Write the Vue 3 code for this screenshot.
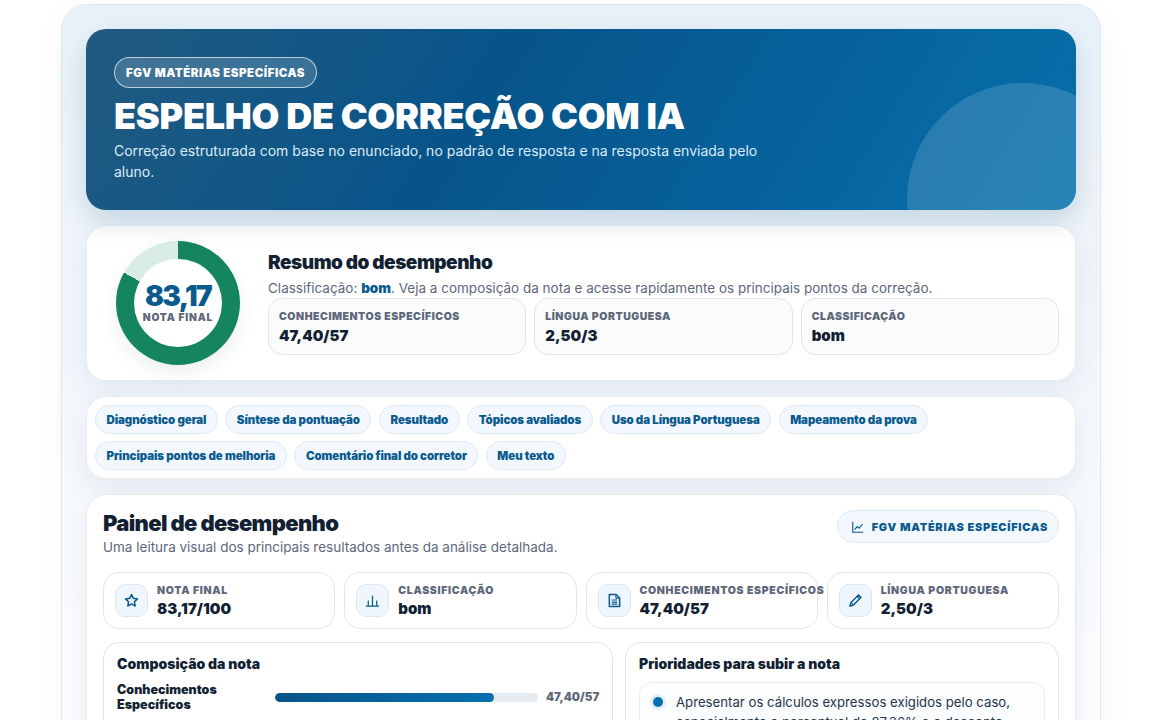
<script setup>
const miniCards = [
  { label: 'Conhecimentos Específicos', value: '47,40/57' },
  { label: 'Língua Portuguesa', value: '2,50/3' },
  { label: 'Classificação', value: 'bom' }
]

const navLinks = [
  'Diagnóstico geral',
  'Síntese da pontuação',
  'Resultado',
  'Tópicos avaliados',
  'Uso da Língua Portuguesa',
  'Mapeamento da prova',
  'Principais pontos de melhoria',
  'Comentário final do corretor',
  'Meu texto'
]

const stats = [
  { icon: 'star', label: 'Nota final', value: '83,17/100' },
  { icon: 'bars', label: 'Classificação', value: 'bom' },
  { icon: 'doc', label: 'Conhecimentos Específicos', value: '47,40/57' },
  { icon: 'pencil', label: 'Língua Portuguesa', value: '2,50/3' }
]

const bars = [
  { label: 'Conhecimentos Específicos', pct: 83.16, value: '47,40/57' },
  { label: 'Língua Portuguesa', pct: 83.33, value: '2,50/3' }
]

const priorities = [
  'Apresentar os cálculos expressos exigidos pelo caso, especialmente o percentual de 87,36% e o desconto aplicado.'
]
</script>

<template>
  <div class="page">
    <main class="shell">
      <header class="hero">
        <span class="hero-badge">FGV MATÉRIAS ESPECÍFICAS</span>
        <h1>ESPELHO DE CORREÇÃO COM IA</h1>
        <p>Correção estruturada com base no enunciado, no padrão de resposta e na resposta enviada pelo aluno.</p>
      </header>

      <section class="card summary">
        <div class="donut-wrap">
          <div class="donut">
            <div class="donut-hole">
              <strong>83,17</strong>
              <span>NOTA FINAL</span>
            </div>
          </div>
        </div>
        <div class="summary-body">
          <h2>Resumo do desempenho</h2>
          <p>Classificação: <b>bom</b>. Veja a composição da nota e acesse rapidamente os principais pontos da correção.</p>
          <div class="mini-grid">
            <div v-for="m in miniCards" :key="m.label" class="mini">
              <span>{{ m.label }}</span>
              <strong>{{ m.value }}</strong>
            </div>
          </div>
        </div>
      </section>

      <nav class="card links">
        <a v-for="link in navLinks" :key="link" class="link-chip">{{ link }}</a>
      </nav>

      <section class="card panel">
        <div class="panel-head">
          <div>
            <h2>Painel de desempenho</h2>
            <p>Uma leitura visual dos principais resultados antes da análise detalhada.</p>
          </div>
          <span class="panel-chip">
            <svg width="12" height="12" viewBox="0 0 16 16" fill="none" stroke="currentColor" stroke-width="1.5">
              <path d="M1 1v14h14" />
              <path d="M3.5 11.5 7 7.5l2.5 2L14 4" />
            </svg>
            FGV MATÉRIAS ESPECÍFICAS
          </span>
        </div>

        <div class="stats">
          <div v-for="s in stats" :key="s.label" class="stat">
            <div class="stat-icon">
              <svg width="15" height="15" viewBox="0 0 16 16" fill="none" stroke="currentColor" stroke-width="1.6" stroke-linejoin="round">
                <path v-if="s.icon === 'star'" d="M8 1.6l1.95 4.1 4.45.6-3.25 3.1.8 4.5L8 11.7l-3.95 2.2.8-4.5L1.6 6.3l4.45-.6z" />
                <path v-else-if="s.icon === 'bars'" d="M1 14h14M3.5 14V8M8 14V3M12.5 14V8" stroke-width="1.3" />
                <g v-else-if="s.icon === 'doc'">
                  <path d="M2.5 1.5h7.2l3.8 3.8v9.2h-11z" />
                  <path d="M9.5 1.5v4h4M5 7.5h6M5 9.7h6M5 11.9h6" stroke-width="1.2" />
                </g>
                <g v-else>
                  <path d="M11.2 2.2l2.6 2.6-8.3 8.3-3.4.8.8-3.4z" />
                  <path d="M9.7 3.7l2.6 2.6M3.6 10.5l1.9 1.9" stroke-width="1.1" />
                </g>
              </svg>
            </div>
            <div class="stat-text">
              <span>{{ s.label }}</span>
              <strong>{{ s.value }}</strong>
            </div>
          </div>
        </div>

        <div class="columns">
          <div class="box">
            <h3>Composição da nota</h3>
            <div v-for="b in bars" :key="b.label" class="bar-row">
              <span class="bar-label">{{ b.label }}</span>
              <div class="bar-track">
                <div class="bar-fill" :style="{ width: b.pct + '%' }"></div>
              </div>
              <span class="bar-value">{{ b.value }}</span>
            </div>
          </div>
          <div class="box">
            <h3>Prioridades para subir a nota</h3>
            <div v-for="p in priorities" :key="p" class="priority">
              <i class="priority-dot"></i>
              <p>{{ p }}</p>
            </div>
          </div>
        </div>
      </section>
    </main>
  </div>
</template>

<style>
html, body {
  margin: 0;
  background: #fff;
}
</style>

<style scoped>
* {
  box-sizing: border-box;
}

.page {
  height: 720px;
  overflow: hidden;
  padding: 4px 59px 0 61px;
  font-family: Inter, "Liberation Sans", sans-serif;
  color: #131f32;
}

.shell {
  display: flex;
  flex-direction: column;
  gap: 15px;
  padding: 24px;
  border: 1px solid #dfe6ee;
  border-radius: 26px;
  background: linear-gradient(180deg, #e8f1f8 0, #fbfcfe 640px);
  box-shadow: 0 10px 30px rgba(20, 50, 80, 0.05);
}

.hero {
  position: relative;
  overflow: hidden;
  height: 181px;
  padding: 28px;
  border-radius: 20px;
  background: linear-gradient(122deg, #215a80 0%, #07548a 40%, #0670ad 100%);
  box-shadow: 0 12px 28px rgba(11, 75, 120, 0.18);
  color: #fff;
}

.hero::after {
  content: '';
  position: absolute;
  top: 54px;
  right: -63px;
  width: 232px;
  height: 232px;
  border-radius: 50%;
  background: rgba(255, 255, 255, 0.14);
}

.hero-badge {
  display: inline-flex;
  align-items: center;
  height: 31px;
  padding: 0 11px;
  border: 1px solid rgba(255, 255, 255, 0.65);
  border-radius: 999px;
  background: rgba(255, 255, 255, 0.16);
  font-size: 11.5px;
  font-weight: 900;
  letter-spacing: 0.046em;
}

.hero h1 {
  margin: 9px 0 0;
  font-size: 36px;
  line-height: 38px;
  font-weight: 900;
  letter-spacing: -0.007em;
}

.hero p {
  position: relative;
  z-index: 1;
  width: 680px;
  margin: 5px 0 0;
  font-size: 14px;
  line-height: 21px;
  color: #dcecf7;
}

.card {
  border: 1px solid #e6ecf2;
  border-radius: 20px;
  background: #fff;
  box-shadow: 0 12px 28px rgba(20, 60, 100, 0.08);
}

.summary {
  display: grid;
  grid-template-columns: 148px 1fr;
  gap: 16px;
  align-items: center;
  padding: 15px 16px 15px 17px;
}

.donut-wrap {
  display: flex;
  justify-content: center;
}

.donut {
  display: flex;
  align-items: center;
  justify-content: center;
  width: 124px;
  height: 124px;
  border-radius: 50%;
  background: conic-gradient(#14855c 0 83.17%, #d9ede6 83.17% 100%);
  box-shadow: 0 8px 18px rgba(20, 50, 80, 0.08);
}

.donut-hole {
  display: flex;
  flex-direction: column;
  align-items: center;
  justify-content: center;
  width: 88px;
  height: 88px;
  padding-bottom: 1px;
  border-radius: 50%;
  background: #fff;
}

.donut-hole strong {
  font-size: 28px;
  line-height: 26px;
  font-weight: 900;
  letter-spacing: -0.06em;
  color: #0b5a8e;
}

.donut-hole span {
  margin-top: 2px;
  font-size: 10.2px;
  line-height: 12px;
  font-weight: 900;
  letter-spacing: 0.08em;
  color: #5d6779;
  white-space: nowrap;
}

.summary-body h2 {
  margin: 0;
  font-size: 19px;
  line-height: 24px;
  font-weight: 900;
  letter-spacing: -0.025em;
}

.summary-body p {
  margin: 5px 0 0;
  font-size: 13.5px;
  line-height: 16px;
  color: #5d6779;
}

.summary-body p b {
  font-weight: 900;
  color: #0b5a8e;
}

.mini-grid {
  display: grid;
  grid-template-columns: repeat(3, 1fr);
  gap: 8px;
  margin-top: 2px;
}

.mini {
  display: flex;
  flex-direction: column;
  justify-content: center;
  height: 57px;
  padding: 1px 10px 0;
  border: 1px solid #dfe6ee;
  border-radius: 14px;
  background: #f9fbfd;
}

.mini span,
.stat-text span {
  font-size: 10.5px;
  line-height: 14px;
  font-weight: 900;
  letter-spacing: 0.05em;
  color: #5d6779;
  text-transform: uppercase;
  white-space: nowrap;
}

.mini strong,
.stat-text strong {
  margin-top: 2px;
  font-size: 15px;
  line-height: 19px;
  font-weight: 900;
}

.links {
  display: flex;
  flex-wrap: wrap;
  gap: 7px 7.5px;
  padding: 8px;
}

.link-chip {
  display: inline-flex;
  align-items: center;
  height: 29px;
  padding: 0 10.5px;
  border: 1px solid #dfe9f2;
  border-radius: 999px;
  background: #f2f8fd;
  font-size: 11.5px;
  font-weight: 900;
  letter-spacing: -0.007em;
  color: #0b5a8e;
}

.panel {
  padding: 15px 16px;
}

.panel-head {
  display: flex;
  align-items: flex-start;
  justify-content: space-between;
}

.panel-head h2 {
  margin: 0;
  font-size: 22px;
  line-height: 27px;
  font-weight: 900;
  letter-spacing: -0.03em;
}

.panel-head p {
  margin: 1px 0 0;
  font-size: 13.5px;
  line-height: 18px;
  color: #5d6779;
}

.panel-chip {
  display: inline-flex;
  align-items: center;
  gap: 8px;
  height: 33px;
  padding: 0 10px 0 14px;
  border: 1px solid #dfe9f2;
  border-radius: 999px;
  background: #f2f8fd;
  font-size: 11px;
  font-weight: 900;
  letter-spacing: 0.065em;
  color: #0b5a8e;
}

.stats {
  display: grid;
  grid-template-columns: repeat(4, minmax(0, 1fr));
  gap: 9px;
  margin-top: 16px;
}

.stat {
  display: flex;
  align-items: center;
  gap: 9px;
  height: 57px;
  padding: 0 11px;
  border: 1px solid #dfe6ee;
  border-radius: 16px;
  background: #fff;
}

.stat-icon {
  display: flex;
  align-items: center;
  justify-content: center;
  flex-shrink: 0;
  width: 33px;
  height: 33px;
  border: 1px solid #dfe6ee;
  border-radius: 10px;
  background: #eff6fc;
  color: #0b5a8e;
}

.stat-text {
  display: flex;
  flex-direction: column;
  min-width: 0;
}

.stat-text span {
  letter-spacing: 0.065em;
}

.stat-text strong {
  margin-top: 1px;
}

.columns {
  display: grid;
  grid-template-columns: 510px 1fr;
  gap: 12px;
  margin-top: 13px;
}

.box {
  padding: 12px 13px 13px;
  border: 1px solid #dfe6ee;
  border-radius: 16px;
  background: #fff;
}

.box h3 {
  margin: 0 0 9px;
  font-size: 14px;
  line-height: 18px;
  font-weight: 900;
}

.bar-row {
  display: grid;
  grid-template-columns: 150px 1fr 53px;
  gap: 8px;
  align-items: center;
  margin-bottom: 10px;
}

.bar-label {
  font-size: 12.5px;
  line-height: 15px;
  font-weight: 900;
}

.bar-track {
  height: 9px;
  overflow: hidden;
  border-radius: 999px;
  background: #e5ecf2;
}

.bar-fill {
  height: 100%;
  border-radius: 999px;
  background: linear-gradient(90deg, #07548a, #0670ad);
}

.bar-value {
  font-size: 11.5px;
  font-weight: 900;
  color: #5d6779;
  white-space: nowrap;
}

.priority {
  display: flex;
  gap: 11px;
  padding: 9px 11px;
  border: 1px solid #e6edf3;
  border-radius: 12px;
  background: #fbfdfe;
}

.priority-dot {
  flex-shrink: 0;
  width: 10px;
  height: 10px;
  margin: 5px 2px 0;
  border-radius: 50%;
  background: #0670ad;
  box-shadow: 0 0 0 3px #e3eff8;
}

.priority p {
  margin: 0;
  font-size: 13.2px;
  line-height: 20px;
  color: #26354a;
}
</style>
